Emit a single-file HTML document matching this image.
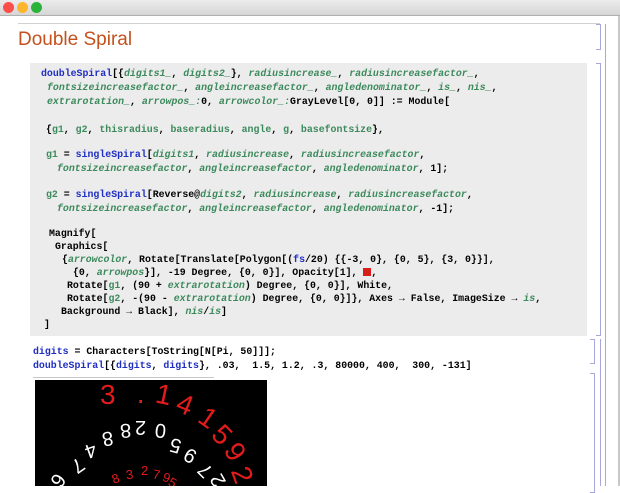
<!DOCTYPE html>
<html><head><meta charset="utf-8"><style>
*{margin:0;padding:0;box-sizing:border-box}
body{width:620px;height:486px;overflow:hidden;background:#fff;position:relative;font-family:"Liberation Mono",monospace}
.tb{position:absolute;left:0;top:0;width:620px;height:16px;background:linear-gradient(#ececec,#d6d6d6);border-bottom:1px solid #b0b0b0}
.dot{position:absolute;top:2px;width:11px;height:11px;border-radius:50%}
.box{position:absolute;left:30px;top:63px;width:557px;height:273px;background:#ececec}
.l{position:absolute;font-weight:bold;font-size:9.9px;line-height:14px;color:#000;white-space:pre;letter-spacing:0}
.b{color:#1f2ec2}
.g{color:#3c8a5c;font-style:italic}
.gn{color:#3c8a5c}
.br{position:absolute;border:1px solid #a8a8dc;border-left:none}
.v{position:absolute;width:1px;background:#a8a8dc}
.img{position:absolute;left:35px;top:380px;width:232px;height:106px;background:#000;overflow:hidden;font-family:"Liberation Sans",sans-serif}
.d,.w,.r{position:absolute;line-height:1;transform-origin:center}
.d{color:#e31b1b;font-size:28px}
.w{color:#fff;font-size:20px}
.r{color:#e31b1b;font-size:13px}
</style></head><body>
<div class="tb"></div>
<div class="dot" style="left:3px;background:#fc4f4a"></div>
<div class="dot" style="left:17px;background:#fdb62c"></div>
<div class="dot" style="left:31px;background:#2bb23a"></div>
<div style="position:absolute;left:618px;top:16px;width:2px;height:470px;background:#c8c8c8"></div>
<div style="position:absolute;left:18px;top:23px;width:582px;height:1px;background:#d0d0d0"></div>
<div style="position:absolute;left:18px;top:29px;font-family:'Liberation Sans',sans-serif;font-size:19px;color:#c4511d">Double Spiral</div>
<div class="box"></div>

<div class="l" style="left:41px;top:67px"><span class="b">doubleSpiral</span>[{<span class="g">digits1_</span>, <span class="g">digits2_</span>}, <span class="g">radiusincrease_</span>, <span class="g">radiusincreasefactor_</span>,</div>
<div class="l" style="left:47px;top:81px"><span class="g">fontsizeincreasefactor_</span>, <span class="g">angleincreasefactor_</span>, <span class="g">angledenominator_</span>, <span class="g">is_</span>, <span class="g">nis_</span>,</div>
<div class="l" style="left:47px;top:95px"><span class="g">extrarotation_</span>, <span class="g">arrowpos_</span><span class="g">:</span>0, <span class="g">arrowcolor_</span><span class="g">:</span>GrayLevel[0, 0]] := Module[</div>
<div class="l" style="left:46px;top:123px">{<span class="gn">g1</span>, <span class="gn">g2</span>, <span class="gn">thisradius</span>, <span class="gn">baseradius</span>, <span class="gn">angle</span>, <span class="gn">g</span>, <span class="gn">basefontsize</span>},</div>
<div class="l" style="left:46px;top:148px"><span class="gn">g1</span> = <span class="b">singleSpiral</span>[<span class="g">digits1</span>, <span class="g">radiusincrease</span>, <span class="g">radiusincreasefactor</span>,</div>
<div class="l" style="left:57px;top:162px"><span class="g">fontsizeincreasefactor</span>, <span class="g">angleincreasefactor</span>, <span class="g">angledenominator</span>, 1];</div>
<div class="l" style="left:46px;top:188px"><span class="gn">g2</span> = <span class="b">singleSpiral</span>[Reverse@<span class="g">digits2</span>, <span class="g">radiusincrease</span>, <span class="g">radiusincreasefactor</span>,</div>
<div class="l" style="left:57px;top:202px"><span class="g">fontsizeincreasefactor</span>, <span class="g">angleincreasefactor</span>, <span class="g">angledenominator</span>, -1];</div>
<div class="l" style="left:49px;top:227px">Magnify[</div>
<div class="l" style="left:55px;top:240px">Graphics[</div>
<div class="l" style="left:62px;top:253px">{<span class="g">arrowcolor</span>, Rotate[Translate[Polygon[(<span class="b">fs</span>/20) {{-3, 0}, {0, 5}, {3, 0}}],</div>
<div class="l" style="left:73px;top:266px">{0, <span class="g">arrowpos</span>}], -19 Degree, {0, 0}], Opacity[1], <span style="display:inline-block;width:8px;height:8px;background:#d61e1e;vertical-align:-1px"></span>,</div>
<div class="l" style="left:67px;top:279px">Rotate[<span class="gn">g1</span>, (90 + <span class="g">extrarotation</span>) Degree, {0, 0}], White,</div>
<div class="l" style="left:67px;top:292px">Rotate[<span class="gn">g2</span>, -(90 - <span class="g">extrarotation</span>) Degree, {0, 0}]}, Axes → False, ImageSize → <span class="g">is</span>,</div>
<div class="l" style="left:61px;top:305px">Background → Black], <span class="g">nis</span>/<span class="g">is</span>]</div>
<div class="l" style="left:44px;top:318px">]</div>

<div class="l" style="left:33px;top:345px"><span class="b">digits</span> = Characters[ToString[N[Pi, 50]]];</div>
<div class="l" style="left:33px;top:359px"><span class="b">doubleSpiral</span>[{<span class="b">digits</span>, <span class="b">digits</span>}, .03,  1.5, 1.2, .3, 80000, 400,  300, -131]</div>
<div style="position:absolute;left:33px;top:377px;width:181px;height:1px;background:#c8c8c8"></div>

<div class="img">
<span class="d" style="left:65px;top:1px">3</span>
<span class="d" style="left:101px;top:6px">·</span>
<span class="d" style="left:121px;top:1px;transform:rotate(12deg)">1</span>
<span class="d" style="left:142px;top:11px;transform:rotate(22deg)">4</span>
<span class="d" style="left:165px;top:24px;transform:rotate(35deg)">1</span>
<span class="d" style="left:179px;top:41px;transform:rotate(45deg)">5</span>
<span class="d" style="left:192px;top:58px;transform:rotate(58deg)">9</span>
<span class="d" style="left:199px;top:81px;transform:rotate(70deg)">2</span>
<span class="w" style="left:67px;top:48px;transform:rotate(170deg)">8</span>
<span class="w" style="left:85px;top:40px;transform:rotate(175deg)">8</span>
<span class="w" style="left:100px;top:37px;transform:rotate(180deg)">2</span>
<span class="w" style="left:120px;top:40px;transform:rotate(185deg)">0</span>
<span class="w" style="left:135px;top:55px;transform:rotate(195deg)">5</span>
<span class="w" style="left:150px;top:65px;transform:rotate(210deg)">9</span>
<span class="w" style="left:165px;top:80px;transform:rotate(225deg)">7</span>
<span class="w" style="left:178px;top:90px;transform:rotate(240deg)">2</span>
<span class="w" style="left:50px;top:60px;transform:rotate(160deg)">4</span>
<span class="w" style="left:37px;top:75px;transform:rotate(145deg)">7</span>
<span class="w" style="left:17px;top:90px;transform:rotate(125deg)">6</span>
<span class="r" style="left:77px;top:92px;transform:rotate(-20deg)">8</span>
<span class="r" style="left:91px;top:88px;transform:rotate(-8deg)">3</span>
<span class="r" style="left:106px;top:84px">2</span>
<span class="r" style="left:118px;top:88px;transform:rotate(10deg)">7</span>
<span class="r" style="left:128px;top:91px;transform:rotate(20deg)">9</span>
<span class="r" style="left:134px;top:96px;transform:rotate(30deg)">5</span>
</div>

<div class="br" style="left:596px;top:24px;width:5px;height:26px"></div>
<div class="v" style="left:605px;top:24px;height:462px"></div>
<div class="br" style="left:596px;top:63px;width:5px;height:273px"></div>
<div class="br" style="left:590px;top:339px;width:5px;height:25px"></div>
<div class="v" style="left:600px;top:339px;height:147px"></div>
<div class="br" style="left:590px;top:373px;width:5px;height:120px"></div>
</body></html>
